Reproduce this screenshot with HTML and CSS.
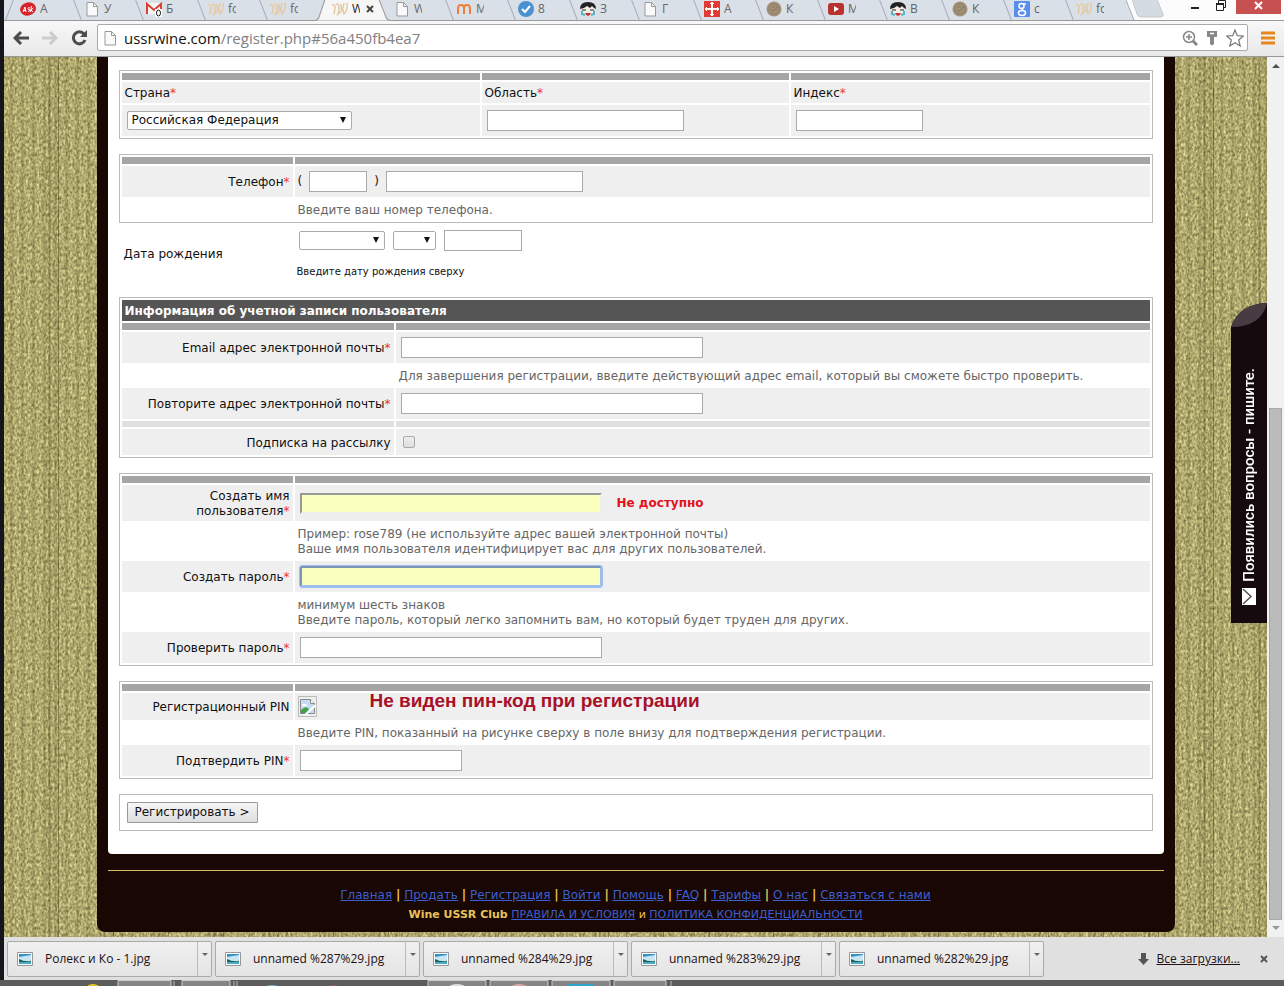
FILE: index.html
```html
<!DOCTYPE html>
<html lang="ru">
<head>
<meta charset="utf-8">
<title>Wine USSR Club</title>
<link rel="stylesheet" href="styles.css">
</head>
<body>
<svg class="defs" aria-hidden="true">
  <symbol id="i-page" viewBox="0 0 16 16"><path d="M3 1.500h6.500L13.500 5.500V15H3z" fill="#fafafa" stroke="#999"/><path d="M9.500 1.500v4h4" fill="none" stroke="#999"/></symbol>
  <symbol id="i-wine" viewBox="0 0 16 16"><path d="M0 4q3-1 3 2t-1 7M4 3q3 0 3 4t-1 6q5-3 6-11M8 3q2 2 1 5M11 8q0 3 1 5 4-4 3-11" fill="none" stroke="#e3caa4" stroke-width="1.500"/></symbol>
  <symbol id="i-face" viewBox="0 0 16 16"><ellipse cx="8" cy="9" rx="6.500" ry="6" fill="#f6efe7"/><path d="M0 8Q0 1 8 1t8 7l-2-1-2-2-2 2-3-2-3 2z" fill="#222"/><path d="M2 9h4M10 9h4" stroke="#222"/><path d="M2 10v3l3 1M14 10v3l-3 1" stroke="#4cb8c8" stroke-width="2" fill="none"/><path d="M5 12h6q-1 3-3 3t-3-3" fill="#c33"/></symbol>
  <symbol id="i-coin" viewBox="0 0 16 16"><circle cx="8" cy="8" r="7.500" fill="#a39078"/><circle cx="8" cy="8" r="5" fill="none" stroke="#8f7e67"/><path d="M5 9l3 1 4-5M6 6h3" fill="none" stroke="#85745d"/></symbol>
  <symbol id="i-pic" viewBox="0 0 16 14"><path d="M.5.500h15v13H.5z" fill="#fff" stroke="#999"/><path d="M2 2h12v10H2z" fill="#c5e6f5"/><path d="M2 2h12v1L8 4 2 5z" fill="#3b8fc9"/><path d="M2 7q5 3 12 2v1H2z" fill="#17624f"/><path d="M2 10h12v2H2z" fill="#4cabc4"/></symbol>
</svg>

<div class="browser">
  <header class="tabstrip">
    <div class="tabs">
      <div class="tab first"><svg class="fav" viewBox="0 0 16 16"><ellipse cx="8" cy="8" rx="8" ry="6.500" fill="#d8232c" transform="rotate(-15 8 8)"/><path d="M3 11l2-5 1 5M3.500 9.500h2.500M10 7q-2-1-2 .5t2 1.500-2 1.500M11.500 5l-1 6M13.500 7l-2.500 2 2 2" fill="none" stroke="#fff"/></svg><span>А</span></div>
      <div class="tab"><svg class="fav"><use href="#i-page"/></svg><span>У</span></div>
      <div class="tab"><svg class="fav" viewBox="0 0 16 16"><path d="M0 2h16v11H0z" fill="#f4f4f4"/><path d="M1 13V3l7 6 7-6v10" fill="none" stroke="#d9402f" stroke-width="2"/><path d="M9 8h7v8H9z" fill="#fff"/><ellipse cx="12.500" cy="12" rx="2" ry="3" fill="none" stroke="#222"/></svg><span>Б</span></div>
      <div class="tab"><svg class="fav"><use href="#i-wine"/></svg><span>fo</span></div>
      <div class="tab"><svg class="fav"><use href="#i-wine"/></svg><span>fo</span></div>
      <div class="tab active"><svg class="shape" viewBox="0 0 74 21" preserveAspectRatio="none"><path d="M0 20.500Q3 20 4 17L10-1h53l7 18q1 3 4 3.500" fill="#f6f6f6" stroke="#999"/></svg><svg class="fav"><use href="#i-wine"/></svg><span>W</span><button class="tab-close" aria-label="Закрыть вкладку"><svg viewBox="0 0 8 8"><path d="M1 1l6 6M7 1L1 7" stroke="#444" stroke-width="2"/></svg></button></div>
      <div class="tab noedge"><svg class="fav"><use href="#i-page"/></svg><span>W</span></div>
      <div class="tab"><svg class="fav" viewBox="0 0 16 16"><path d="M2 13V7q0-3 3-3t3 3v6M8 7q0-3 3-3t3 3v6" fill="none" stroke="#ef7f3a" stroke-width="2"/></svg><span>М</span></div>
      <div class="tab"><svg class="fav" viewBox="0 0 16 16"><circle cx="8" cy="8" r="8" fill="#4a92cf"/><path d="M4 8l3 3 5-6" fill="none" stroke="#fff" stroke-width="2"/></svg><span>8</span></div>
      <div class="tab"><svg class="fav"><use href="#i-face"/></svg><span>З</span></div>
      <div class="tab"><svg class="fav"><use href="#i-page"/></svg><span>Г</span></div>
      <div class="tab"><svg class="fav" viewBox="0 0 16 16"><path d="M0 0h16v16H0z" fill="#e23a35"/><path d="M8 1v14M1 8h14" stroke="#fff" stroke-width="2"/><path d="M6 2.500h4M6 13.500h4M2.500 6v4M13.500 6v4" stroke="#fff"/></svg><span>А</span></div>
      <div class="tab"><svg class="fav"><use href="#i-coin"/></svg><span>К</span></div>
      <div class="tab"><svg class="fav" viewBox="0 0 16 16"><rect y="2" width="16" height="12" rx="3" fill="#b9322f"/><path d="M6 5l5 3-5 3z" fill="#fff"/></svg><span>М</span></div>
      <div class="tab"><svg class="fav"><use href="#i-face"/></svg><span>В</span></div>
      <div class="tab"><svg class="fav"><use href="#i-coin"/></svg><span>К</span></div>
      <div class="tab"><svg class="fav" viewBox="0 0 16 16"><rect width="16" height="16" rx="1" fill="#5b8def"/><circle cx="7.500" cy="5" r="2.500" fill="none" stroke="#fff" stroke-width="1.500"/><ellipse cx="8" cy="12" rx="3.500" ry="2.500" fill="none" stroke="#fff" stroke-width="1.500"/><path d="M9 3h3M8 7.500l1 2" stroke="#fff" stroke-width="1.500"/></svg><span>с</span></div>
      <div class="tab"><svg class="fav"><use href="#i-wine"/></svg><span>fo</span></div>
      <button class="newtab" aria-label="Новая вкладка"><svg viewBox="0 0 42 20"><path d="M0 0l8 20H0z" fill="#dae0e8"/><path d="M0 0l8 20" stroke="#aab"/><path d="M6-1h22q3 0 4 3l5 12q1 3-3 3H15q-3 0-4-3z" fill="#d5dbe2" stroke="#c3c8ce"/></svg></button>
    </div>
    <div class="winctl">
      <button aria-label="Свернуть"><svg viewBox="0 0 10 14"><path d="M1 8h8" stroke="#222" stroke-width="2"/></svg></button>
      <button aria-label="Восстановить"><svg viewBox="0 0 10 14"><path d="M.5 3.500h7v7h-7zM2.500 3V.5h7v7H8" fill="none" stroke="#222"/><path d="M0 4h8" stroke="#222" stroke-width="2"/></svg></button>
      <button class="close" aria-label="Закрыть"><svg viewBox="0 0 10 14"><path d="M1 2l7 7M8 2L1 9" stroke="#fff" stroke-width="2"/></svg></button>
    </div>
  </header>

  <nav class="toolbar">
    <button aria-label="Назад"><svg viewBox="0 0 16 16"><path d="M16 8H3M8 2L2 8l6 6" fill="none" stroke="#4c4c4c" stroke-width="3"/></svg></button>
    <button aria-label="Вперёд"><svg viewBox="0 0 16 16"><path d="M0 8h13M8 2l6 6-6 6" fill="none" stroke="#ccc" stroke-width="3"/></svg></button>
    <button aria-label="Обновить"><svg viewBox="0 0 16 16"><path d="M13 4A6 6 0 1 0 14 10" fill="none" stroke="#4c4c4c" stroke-width="3"/><path d="M16 0v7H9z" fill="#4c4c4c"/></svg></button>
    <div class="omnibox">
      <svg class="pageicon"><use href="#i-page"/></svg>
      <span class="url"><b>ussrwine.com</b>/register.php#56a450fb4ea7</span>
      <svg class="oi" viewBox="0 0 16 16"><circle cx="7" cy="7" r="5.500" fill="none" stroke="#888" stroke-width="1.500"/><path d="M11 11l4 4" stroke="#888" stroke-width="3"/><path d="M4 7h6M7 4v6" stroke="#888" stroke-width="1.500"/></svg>
      <svg class="oi" viewBox="0 0 16 16"><path d="M3 1h10v6h-3v7l-2 1.500L6 14V7H3z" fill="#888"/><path d="M6 3.500h4" stroke="#fff" stroke-width="1.500"/></svg>
      <svg class="oi star" viewBox="0 0 18 18"><path d="M9 1l2.300 5.700 6 .3-4.600 4 1.500 6L9 13.700 3.800 17l1.500-6L.7 7l6-.3z" fill="#fff" stroke="#777" stroke-width="1.200"/></svg>
    </div>
    <button aria-label="Меню"><svg viewBox="0 0 14 14"><path d="M0 2h14M0 7h14M0 12h14" stroke="#e8871e" stroke-width="3"/></svg></button>
  </nav>

  <div class="viewport">
    <div class="scene">
      <svg class="fabric" aria-hidden="true">
        <filter id="weave" x="0" y="0" width="100%" height="100%" color-interpolation-filters="sRGB">
          <feTurbulence type="fractalNoise" baseFrequency="0.45 0.3" numOctaves="2" seed="4"/>
          <feColorMatrix values="0.650 0 0 0 0.370  0.650 0 0 0 0.345  0.500 0 0 0 0.190  0 0 0 0 1"/>
        </filter>
        <rect width="100%" height="100%" filter="url(#weave)"/>
      </svg>
      <div class="threads"></div>
      <main class="site">
        <form class="sheet">
          <div class="box thirds">
            <i class="bar"></i><i class="bar"></i><i class="bar"></i>
            <label class="cell" for="country">Страна<em>*</em></label>
            <label class="cell" for="region">Область<em>*</em></label>
            <label class="cell" for="zip">Индекс<em>*</em></label>
            <div class="cell field"><span class="pick w225"><select id="country"><option>Российская Федерация</option></select></span></div>
            <div class="cell field"><input class="w198" id="region" type="text"></div>
            <div class="cell field"><input class="w127" id="zip" type="text"></div>
          </div>

          <div class="box narrow">
            <i class="bar"></i><i class="bar"></i>
            <label class="cell name" for="phone"><span>Телефон<em>*</em></span></label>
            <div class="cell field phone"><span>(</span><input class="w58" type="text" aria-label="Код"><span>)</span><input class="w198" id="phone" type="text"></div>
            <p class="hint">Введите ваш номер телефона.</p>
          </div>

          <div class="birth">
            <span>Дата рождения</span>
            <div>
              <div class="date">
                <span class="pick w86"><select aria-label="Месяц"><option></option></select></span>
                <span class="pick w43"><select aria-label="День"><option></option></select></span>
                <input class="w78" type="text" aria-label="Год">
              </div>
              <small>Введите дату рождения сверху</small>
            </div>
          </div>

          <div class="box wide">
            <h2>Информация об учетной записи пользователя</h2>
            <i class="bar"></i><i class="bar"></i>
            <label class="cell name" for="mail"><span>Email адрес электронной почты<em>*</em></span></label>
            <div class="cell field"><input class="w302" id="mail" type="email"></div>
            <p class="hint">Для завершения регистрации, введите действующий адрес email, который вы сможете быстро проверить.</p>
            <label class="cell name" for="mail2"><span>Повторите адрес электронной почты<em>*</em></span></label>
            <div class="cell field"><input class="w302" id="mail2" type="email"></div>
            <i class="line"></i><i class="line"></i>
            <label class="cell name" for="news">Подписка на рассылку</label>
            <div class="cell field short"><input id="news" type="checkbox"></div>
          </div>

          <div class="box narrow">
            <i class="bar"></i><i class="bar"></i>
            <label class="cell name" for="login"><span>Создать имя пользователя<em>*</em></span></label>
            <div class="cell field"><input class="w302 filled" id="login" type="text"><strong>Не доступно</strong></div>
            <p class="hint">Пример: rose789 (не используйте адрес вашей электронной почты)<br>Ваше имя пользователя идентифицирует вас для других пользователей.</p>
            <label class="cell name" for="pass"><span>Создать пароль<em>*</em></span></label>
            <div class="cell field"><input class="w302 filled focused" id="pass" type="password"></div>
            <p class="hint">минимум шесть знаков<br>Введите пароль, который легко запомнить вам, но который будет труден для других.</p>
            <label class="cell name" for="pass2"><span>Проверить пароль<em>*</em></span></label>
            <div class="cell field"><input class="w302" id="pass2" type="password"></div>
          </div>

          <div class="box narrow">
            <i class="bar"></i><i class="bar"></i>
            <div class="cell name">Регистрационный PIN</div>
            <div class="cell pin">
              <svg class="broken" viewBox="0 0 19 21"><path d="M.5.500h18v20H.5z" fill="none" stroke="#bbb"/><path d="M2.500 3.500h10l4 4v10h-14z" fill="#c5dcf5" stroke="#888"/><path d="M12.500 3.500v4h4" fill="#fff" stroke="#888"/><path d="M3 17v-3q5-5 8-1l-3 4z" fill="#43a047"/><path d="M7 19L18 9" stroke="#fff" stroke-width="2"/><path d="M4 9q1-2 3-1 2 0 2 2H4z" fill="#fff"/></svg>
              <span class="note">Не виден пин-код при регистрации</span>
            </div>
            <p class="hint">Введите PIN, показанный на рисунке сверху в поле внизу для подтверждения регистрации.</p>
            <label class="cell name" for="pin"><span>Подтвердить PIN<em>*</em></span></label>
            <div class="cell field"><input class="w162" id="pin" type="text"></div>
          </div>

          <div class="box submit"><button type="button">Регистрировать &gt;</button></div>
        </form>

        <footer class="foot">
          <p><a href="#">Главная</a> <b>|</b> <a href="#">Продать</a> <b>|</b> <a href="#">Регистрация</a> <b>|</b> <a href="#">Войти</a> <b>|</b> <a href="#">Помощь</a> <b>|</b> <a href="#">FAQ</a> <b>|</b> <a href="#">Тарифы</a> <b>|</b> <a href="#">О нас</a> <b>|</b> <a href="#">Связаться с нами</a></p>
          <p class="legal"><b>Wine USSR Club</b> <a href="#">ПРАВИЛА И УСЛОВИЯ</a> и <a href="#">ПОЛИТИКА КОНФИДЕНЦИАЛЬНОСТИ</a></p>
        </footer>
      </main>
      <button class="ask">
        <svg class="curl" viewBox="0 0 36 24"><path d="M0 24Q8 1 36 0v24z" fill="#150b0e"/><path d="M0 24Q8 1 36 0 30 24 0 24z" fill="#483b42"/></svg>
        <span>Появились вопросы - пишите.</span>
        <svg class="envelope" viewBox="0 0 14 17"><path d="M0 0h14v17H0z" fill="#fff"/><path d="M1 1l8 7.500L1 16" fill="none" stroke="#555" stroke-width="1.500"/></svg>
      </button>
    </div>
    <div class="scroll" aria-hidden="true">
      <svg viewBox="0 0 17 17"><path d="M5 11l4-4 4 4z" fill="#505050"/></svg>
      <div class="track"><div class="thumb"></div></div>
      <svg viewBox="0 0 17 17"><path d="M5 6l4 4 4-4z" fill="#999"/></svg>
    </div>
  </div>

  <section class="shelf">
    <div class="dl"><svg><use href="#i-pic"/></svg><span>Ролекс и Ко - 1.jpg</span><button aria-label="Меню загрузки"></button></div>
    <div class="dl"><svg><use href="#i-pic"/></svg><span>unnamed %287%29.jpg</span><button aria-label="Меню загрузки"></button></div>
    <div class="dl"><svg><use href="#i-pic"/></svg><span>unnamed %284%29.jpg</span><button aria-label="Меню загрузки"></button></div>
    <div class="dl"><svg><use href="#i-pic"/></svg><span>unnamed %283%29.jpg</span><button aria-label="Меню загрузки"></button></div>
    <div class="dl"><svg><use href="#i-pic"/></svg><span>unnamed %282%29.jpg</span><button aria-label="Меню загрузки"></button></div>
    <svg class="down" viewBox="0 0 11 12"><path d="M3 0h5v6h3l-5.500 6L0 6h3z" fill="#555"/></svg>
    <a href="#">Все загрузки...</a>
    <button class="shelf-close" aria-label="Закрыть"><svg viewBox="0 0 8 8"><path d="M1 1l6 6M7 1L1 7" stroke="#555" stroke-width="2"/></svg></button>
  </section>
</div>
<div class="taskbar">
  <svg viewBox="0 0 680 6" aria-hidden="true"><path d="M118 6V.5h53V6M182 6V.5h48V6M428 6V.5h58V6M490 6V.5h58V6M552 6V.5h58V6M614 6V.5h52V6" fill="#858585" stroke="#ccc"/><path d="M174 1v5M234 1v5M237 1v5M671 1v5" stroke="#bbb"/><ellipse cx="93" cy="7" rx="6" ry="3" fill="#e2c51d"/><ellipse cx="272" cy="7" rx="6" ry="2" fill="#7db1d5"/><ellipse cx="334" cy="7" rx="5" ry="2" fill="#a55"/><ellipse cx="457" cy="7" rx="8" ry="3" fill="#ddd"/><ellipse cx="519" cy="7" rx="8" ry="3" fill="#dba5a5"/><path d="M567 4h26v2h-26z" fill="#2fa4cd"/></svg>
</div>
</body>
</html>
```

FILE: styles.css
```css
* { box-sizing: border-box; }

body {
  margin: 0;
  height: 100vh;
  display: flex;
  flex-direction: column;
  overflow: hidden;
  background: #15151b;
  font-family: "Open Sans", "Noto Sans", sans-serif;
  font-size: 12px;
}

button { font: inherit; border: 0; padding: 0; background: none; }
p, h2 { margin: 0; }
svg { display: block; flex: none; }
.defs { position: absolute; width: 0; height: 0; }

.browser {
  flex: 1;
  min-height: 0;
  margin-left: 4px;
  display: flex;
  flex-direction: column;
}

/* Tab strip */
.tabstrip {
  display: flex;
  justify-content: space-between;
  height: 21px;
  background: #fcfcfc;
  border-bottom: 1px solid #999;
}
.tabs { display: flex; flex: 1; min-width: 0; }
.tab {
  position: relative;
  flex: 0 1 62px;
  min-width: 0;
  display: flex;
  align-items: center;
  gap: 4px;
  height: 20px;
  padding: 0 0 3px 12px;
  background: #dae0e8;
  color: #666;
}
.tab.first { flex-basis: 68px; padding-left: 16px; }
.tab::before {
  content: "";
  position: absolute;
  left: 5px;
  top: -2px;
  height: 24px;
  border-left: 1px solid #aab;
  transform: rotate(-21deg);
}
.tab.first::before { transform: rotate(21deg); }
.tab.active::before, .tab.noedge::before { display: none; }
.tab.active { z-index: 1; color: #222; }
.tab span { position: relative; width: 8px; overflow: hidden; white-space: nowrap; }
.fav { position: relative; width: 16px; height: 16px; }
.shape { position: absolute; left: -5px; top: 0; width: 75px; height: 21px; }
.tab-close { position: relative; margin-left: 2px; }
.tab-close svg { width: 8px; height: 8px; }
.newtab svg { width: 42px; height: 20px; }
.winctl { display: flex; gap: 16px; height: 14px; padding-right: 3px; }
.winctl svg { width: 10px; height: 14px; }
.winctl .close { display: flex; justify-content: center; width: 45px; margin-left: -6px; background: #c75050; }

/* Toolbar */
.toolbar {
  display: flex;
  align-items: center;
  gap: 13px;
  height: 36px;
  padding: 0 9px 2px 9px;
  background: linear-gradient(#f8f8f8, #e8e8e8);
  border-bottom: 1px solid #999;
}
.toolbar > button svg { width: 16px; height: 16px; }
.toolbar > button:last-child svg { width: 14px; height: 14px; }
.omnibox {
  flex: 1;
  display: flex;
  align-items: center;
  gap: 6px;
  height: 27px;
  padding: 0 3px 0 4px;
  margin-left: -3px;
  background: #fff;
  border: 1px solid #aaa;
  border-radius: 2px;
}
.pageicon { width: 16px; height: 16px; }
.url { flex: 1; font-size: 15px; color: #808080; white-space: nowrap; }
.url b { font-weight: 400; color: #111; }
.oi { width: 16px; height: 16px; }
.oi.star { width: 18px; height: 18px; }

/* Page area */
.viewport { flex: 1; min-height: 0; display: flex; }
.scene { position: relative; flex: 1; min-width: 0; overflow: hidden; background: #a59c62; }
.fabric { position: absolute; inset: 0; width: 100%; height: 100%; }
.threads {
  position: absolute;
  inset: 0;
  background:
    repeating-linear-gradient(90deg, transparent 0 44px, rgba(50, 40, 5, .3) 45px 46px, transparent 47px 54px, rgba(50, 40, 5, .4) 54px 55px),
    repeating-linear-gradient(90deg, transparent 0 5px, rgba(70, 60, 15, .18) 7px 8px, transparent 10px 11px);
}
.site {
  position: relative;
  max-width: 1078px;
  margin: 0 auto;
  padding: 0 11px;
  background: #180702;
  border-radius: 0 0 8px 8px;
  font-family: "DejaVu Sans", sans-serif;
  line-height: 15px;
}
.sheet {
  display: flex;
  flex-direction: column;
  gap: 15px;
  padding: 13px 11px 23px;
  background: #fff;
  border-radius: 0 0 4px 4px;
}
.box { display: grid; gap: 2px; padding: 2px; border: 1px solid #bbb; }
.thirds { grid-template-columns: 358fr 307fr 359fr; }
.narrow { grid-template-columns: 171px 1fr; }
.wide { grid-template-columns: 272px 1fr; }
.bar { height: 7px; background: #a5a5a5; }
.line { height: 6px; background: #e0e0e0; }
.box h2 {
  grid-column: 1 / -1;
  padding: 4px 3px 2px;
  background: #555;
  color: #fff;
  font-size: 12px;
}
.cell { padding: 4px 3px 2px; background: #efefef; color: #111; }
.cell em { color: #e33; font-style: normal; }
.name { display: flex; align-items: center; justify-content: flex-end; text-align: right; }
.hint { grid-column: 2; padding: 4px 3px 2px; color: #666; }
.field { display: flex; align-items: center; min-height: 31px; padding: 0 5px; }
.field.short { min-height: 26px; }
.phone { gap: 7px; padding-left: 3px; }
.field strong { margin-left: 15px; color: #e1121b; }

input[type="text"], input[type="email"], input[type="password"] {
  height: 21px;
  margin: 0;
  padding: 1px 3px;
  border: 1px solid #aaa;
  background: #fff;
  font: inherit;
}
input[type="checkbox"] {
  appearance: none;
  width: 12px;
  height: 12px;
  margin: 0 2px;
  border: 1px solid #aaa;
  border-radius: 2px;
  background: linear-gradient(#eee, #ddd);
}
.field input.filled { background: #faffbd; border: 2px solid; border-color: #999 #eee #eee #999; }
.field input.focused { border-color: #7b95b8 #9dbcf0 #9dbcf0 #7b95b8; border-radius: 2px; outline: 1px solid #9dbcf0; outline-offset: 0; }
.w43 { width: 43px; }
.w58 { width: 58px; }
.w78 { width: 78px; }
.w86 { width: 86px; }
.w127 { width: 127px; }
.w162 { width: 162px; }
.w198 { width: 197px; }
.w225 { width: 225px; }
.w302 { width: 302px; }

.pick { position: relative; }
.pick select {
  display: block;
  appearance: none;
  width: 100%;
  height: 19px;
  padding: 0 4px;
  border: 1px solid #aaa;
  border-radius: 2px;
  background: #fff;
  color: #111;
  font: inherit;
}
.pick::after {
  content: "";
  position: absolute;
  right: 6px;
  top: 6px;
  border: 3px solid transparent;
  border-top: 6px solid #111;
  border-bottom: 0;
}

.birth {
  display: grid;
  grid-template-columns: 173px 1fr;
  align-items: center;
  margin-top: -8px;
  padding: 0 0 4px 5px;
  color: #111;
}
.date { display: flex; align-items: center; gap: 8px; padding-left: 2px; margin-bottom: 15px; }
.birth small { display: block; font-size: 10px; line-height: 12px; }

.pin { position: relative; display: flex; padding: 3px; }
.broken { width: 19px; height: 21px; }
.note {
  position: absolute;
  left: 75px;
  top: -3px;
  color: #a81028;
  font: bold 19px/22px "Liberation Sans", sans-serif;
  white-space: nowrap;
}
.submit { padding: 7px; justify-items: start; }
.submit button {
  height: 21px;
  padding: 0 7px;
  border: 1px solid #999;
  border-radius: 1px;
  background: linear-gradient(#f6f6f6, #ddd);
  color: #111;
}

.foot {
  margin-top: 16px;
  padding: 15px 0 8px;
  border-top: 1px solid #d4bd62;
  color: #e8c25a;
  text-align: center;
}
.foot p { height: 19px; line-height: 19px; }
.foot a { color: #3c5fd0; }
.foot .legal { font-size: 11px; }

.ask {
  position: absolute;
  right: 0;
  top: 246px;
  width: 36px;
  height: 320px;
  display: flex;
  flex-direction: column;
  align-items: center;
  padding-bottom: 18px;
  background: linear-gradient(transparent 24px, #150b0e 24px);
  color: #fff;
}
.curl { width: 36px; height: 24px; margin-bottom: auto; }
.ask span {
  writing-mode: vertical-rl;
  transform: rotate(180deg);
  font: 500 15px/18px Roboto, sans-serif;
  white-space: nowrap;
}
.envelope { width: 14px; height: 17px; margin-top: 6px; }

.scroll { width: 17px; display: flex; flex-direction: column; background: #f1f1f1; }
.scroll svg { width: 17px; height: 17px; }
.track { flex: 1; display: flex; flex-direction: column; align-items: center; }
.track::before { content: ""; flex: 334; }
.thumb { flex: 511; width: 13px; background: #bbb; border: 1px solid #a8a8a8; }

/* Downloads */
.shelf {
  display: flex;
  align-items: center;
  height: 43px;
  padding: 0 16px 0 3px;
  background: #e0e0e0;
}
.dl {
  flex: 0 1 205px;
  display: flex;
  align-items: center;
  height: 36px;
  margin-right: 3px;
  padding-left: 9px;
  border: 1px solid #aaa;
  border-radius: 2px;
  background: linear-gradient(#f0f0f0, #e4e4e4);
}
.dl svg { width: 16px; height: 14px; }
.dl span { flex: 1; padding-left: 12px; white-space: nowrap; color: #211; }
.dl button { width: 14px; height: 34px; border-left: 1px solid #bbb; }
.dl button::after {
  content: "";
  display: block;
  width: 0;
  margin: -6px auto 0;
  border: 3px solid transparent;
  border-top-color: #666;
  border-bottom: 0;
}
.down { width: 11px; height: 12px; margin: 0 8px 0 auto; }
.shelf a { color: #211; }
.shelf-close { margin-left: 20px; }
.shelf-close svg { width: 8px; height: 8px; }

.taskbar { height: 6px; background: #5c5c5c; }
.taskbar svg { width: 680px; height: 6px; }
```
